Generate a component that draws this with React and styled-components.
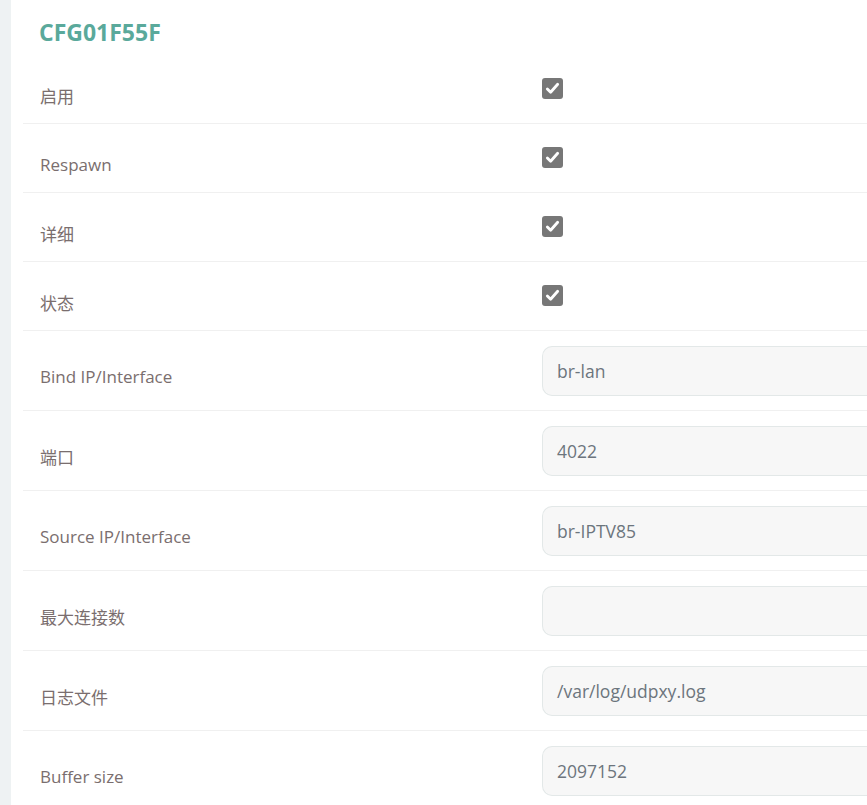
import React from "react";
import styled, { createGlobalStyle } from "styled-components";

const GlobalStyle = createGlobalStyle`
  html, body {
    margin: 0;
    padding: 0;
    background: #eef2f3;
    font-family: "Open Sans", "Noto Sans CJK SC", sans-serif;
    overflow: hidden;
  }
`;

const Page = styled.div`
  display: flex;
  min-height: 805px;
`;

const Panel = styled.div`
  flex: 1;
  margin-left: 11px;
  background: #fff;
  padding: 0 0 0 12px;
`;

const Title = styled.h3`
  margin: 0;
  padding: 17px 0 8px 16px;
  font-size: 23px;
  font-weight: 700;
  color: #5aa99b;
  line-height: 30px;
`;

const Row = styled.div`
  display: flex;
  align-items: center;
  height: ${(p) => (p.$input ? 80 : 69)}px;
  border-bottom: 1px solid #f0f0f0;
  box-sizing: border-box;
`;

const Label = styled.div`
  width: 519px;
  box-sizing: border-box;
  padding-left: 17px;
  padding-top: ${(p) => (p.$input ? 11 : 13)}px;
  flex-shrink: 0;
  font-size: 17px;
  color: #7a6e6e;
`;

const Field = styled.div`
  flex: 1;
  display: flex;
  align-items: center;
`;

const Box = styled.span`
  width: 21px;
  height: 21px;
  border-radius: 3px;
  background: #777;
  display: inline-flex;
  align-items: center;
  justify-content: center;
  margin-top: -2px;
`;

const Input = styled.div`
  width: 100%;
  height: 50px;
  box-sizing: border-box;
  margin-right: -12px;
  background: #f7f7f7;
  border: 1px solid #e3e8e8;
  border-right: none;
  border-radius: 10px 0 0 10px;
  padding-left: 14px;
  display: flex;
  align-items: center;
  font-size: 17.5px;
  color: #6c757d;
`;

const Check = () => (
  <Box>
    <svg width="15" height="15" viewBox="0 0 16 16">
      <path
        d="M2.5 8.5 L6 12 L13.5 3.5"
        fill="none"
        stroke="#fff"
        strokeWidth="3"
        strokeLinecap="round"
        strokeLinejoin="round"
      />
    </svg>
  </Box>
);

const rows = [
  { label: "启用" },
  { label: "Respawn" },
  { label: "详细" },
  { label: "状态" },
  { label: "Bind IP/Interface", value: "br-lan" },
  { label: "端口", value: "4022" },
  { label: "Source IP/Interface", value: "br-IPTV85" },
  { label: "最大连接数", value: "" },
  { label: "日志文件", value: "/var/log/udpxy.log" },
  { label: "Buffer size", value: "2097152" },
];

const App = () => {
  return (
    <Page>
      <GlobalStyle />
      <Panel>
        <Title>CFG01F55F</Title>
        {rows.map((r) => {
          const isInput = r.value !== undefined;
          return (
            <Row key={r.label} $input={isInput}>
              <Label $input={isInput}>{r.label}</Label>
              <Field>{isInput ? <Input>{r.value}</Input> : <Check />}</Field>
            </Row>
          );
        })}
      </Panel>
    </Page>
  );
};

export default App;
